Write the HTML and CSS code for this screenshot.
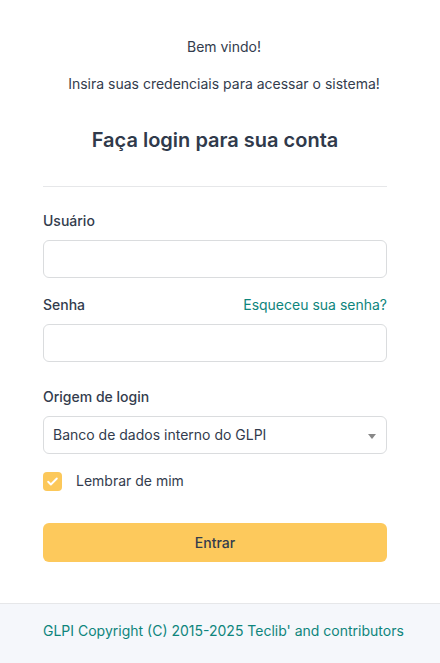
FILE: index.html
```html
<!DOCTYPE html>
<html lang="pt-BR">
<head>
<meta charset="utf-8">
<link rel="stylesheet" href="styles.css">
</head>
<body>
<div class="page">
  <div class="welcome">
    <p class="line first">Bem vindo!</p>
    <p class="line second">Insira suas credenciais para acessar o sistema!</p>
  </div>
  <div class="card">
    <h2 class="title">Faça login para sua conta</h2>
    <hr class="divider">
    <div class="field field-user">
      <label class="label">Usuário</label>
      <input class="input" type="text">
    </div>
    <div class="field field-pass">
      <div class="label-row">
        <label class="label">Senha</label>
        <a class="link" href="#">Esqueceu sua senha?</a>
      </div>
      <input class="input" type="password">
    </div>
    <div class="field field-auth">
      <label class="label">Origem de login</label>
      <div class="select">
        <span>Banco de dados interno do GLPI</span>
        <span class="caret"></span>
      </div>
    </div>
    <div class="check-row">
      <span class="checkbox">
        <svg width="13" height="13" viewBox="0 0 24 24" fill="none" stroke="#fff" stroke-width="3.5" stroke-linecap="round" stroke-linejoin="round"><path d="M4 12.5l5 5L20 6.5"/></svg>
      </span>
      <span class="check-label">Lembrar de mim</span>
    </div>
    <button class="btn">Entrar</button>
  </div>
</div>
<footer class="footer">
  <a class="footer-link" href="#">GLPI Copyright (C) 2015-2025 Teclib' and contributors</a>
</footer>
</body>
</html>
```
FILE: styles.css
```css
* { box-sizing: border-box; }
html, body { margin: 0; padding: 0; }
body {
  font-family: Inter, "Noto Sans", sans-serif;
  font-size: 14px;
  line-height: 20px;
  color: #333c4d;
  background: #ffffff;
  width: 440px;
  height: 663px;
  display: flex;
  flex-direction: column;
}
.page { flex: 1; }
.welcome { text-align: center; padding-left: 8px; }
.line { margin: 0; }
.first { padding-top: 37px; }
.second { padding-top: 17px; }
.card { padding: 0 53px 0 43px; }
.title {
  margin: 32px 0 0;
  font-size: 20px;
  line-height: 28px;
  font-weight: 600;
  text-align: center;
  color: #303a4b;
}
.divider {
  margin: 32px 0 0;
  border: 0;
  border-top: 1px solid #e6e7e9;
  height: 0;
}
.field-user { margin-top: 24px; }
.field-pass { margin-top: 17px; }
.field-auth { margin-top: 25px; }
.label {
  display: block;
  font-weight: 500;
  line-height: 20px;
  margin-bottom: 9px;
}
.label-row {
  display: flex;
  justify-content: space-between;
  align-items: baseline;
}
.link {
  color: #0e857c;
  text-decoration: none;
  line-height: 20px;
}
.input {
  display: block;
  width: 100%;
  height: 38px;
  border: 1px solid #dadcde;
  border-radius: 6px;
  background: #fff;
  font: inherit;
  padding: 0 10px;
}
.select {
  display: flex;
  align-items: center;
  justify-content: space-between;
  height: 38px;
  border: 1px solid #dadcde;
  border-radius: 6px;
  padding: 0 10px 0 9px;
}
.caret {
  width: 0; height: 0;
  border-left: 4px solid transparent;
  border-right: 4px solid transparent;
  border-top: 5px solid #888;
  margin-top: 2px;
}
.check-row {
  display: flex;
  align-items: center;
  margin-top: 17px;
  height: 20px;
}
.checkbox {
  width: 19px; height: 19px;
  border-radius: 4px;
  background: #fcc85a;
  display: flex;
  align-items: center;
  justify-content: center;
  margin-right: 14px;
  margin-top: 1px;
}
.btn {
  display: block;
  width: 100%;
  height: 39px;
  margin-top: 32px;
  background: #fdc95c;
  border: 0;
  border-radius: 6px;
  font: inherit;
  font-weight: 500;
  color: #333c4d;
}
.footer {
  height: 60px;
  background: #f5f7fb;
  border-top: 1px solid #e6e7e9;
  padding: 17px 0 0 43px;
}
.footer-link { color: #0e857c; text-decoration: none; }
```
